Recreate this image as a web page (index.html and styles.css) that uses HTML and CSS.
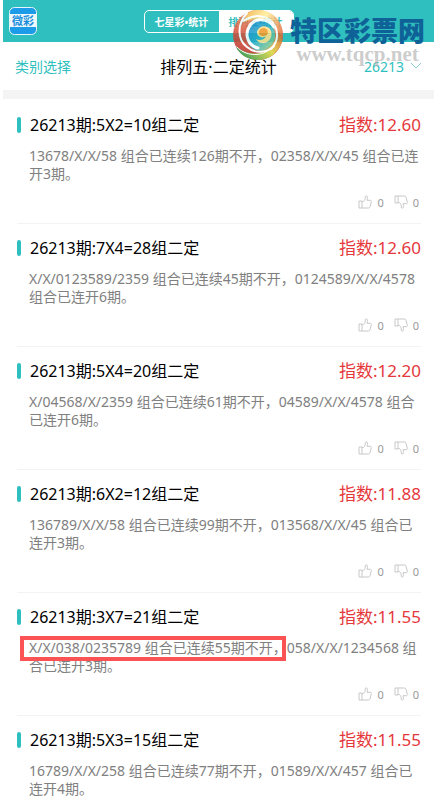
FILE: index.html
```html
<!DOCTYPE html>
<html lang="zh-CN">

<head>
    <meta charset="UTF-8">
    <meta name="viewport" content="width=device-width, initial-scale=1.0">
    <title>排列五·二定统计</title>
    <link rel="stylesheet" href="styles.css">
</head>

<body>
    <svg class="sprite" aria-hidden="true">
        <symbol id="thumb" viewBox="0 0 14 14">
            <path d="M1 6h3v7H1zM4 6.500h1.500C7 5 7.300 3.600 7.300 2c0-.9.5-1.300 1.100-1.200C9.600 1 9.800 2.700 9 5.300h3.300c.9 0 1.200.7 1 1.500l-1.300 5c-.2.800-.7 1.200-1.500 1.200H4"/>
        </symbol>
    </svg>

    <header class="header">
        <a class="logo" href="#" aria-label="微彩">
            <svg viewBox="0 0 28 28">
                <rect x="0.500" y="0.500" width="27" height="27" rx="5" fill="#1b9be8" stroke="#e4f6fb"/>
                <rect x="1" y="7" width="26" height="13" fill="#eef8fd"/>
                <text x="14" y="18" text-anchor="middle">微彩</text>
            </svg>
        </a>
        <nav class="tabs">
            <button class="tab">七星彩•统计</button>
            <button class="tab active">排列五•统计</button>
        </nav>
        <div class="watermark">
            <svg class="orb" viewBox="0 0 52 52">
                <defs>
                    <linearGradient id="red" x1="0.5" y1="0" x2="0.3" y2="1">
                        <stop offset="0" stop-color="#f2a066"/>
                        <stop offset="0.5" stop-color="#d4513c"/>
                        <stop offset="1" stop-color="#b3261f"/>
                    </linearGradient>
                    <linearGradient id="gold" x1="0" y1="0" x2="1" y2="0.8">
                        <stop offset="0" stop-color="#f0a83c"/>
                        <stop offset="0.4" stop-color="#fff09a"/>
                        <stop offset="1" stop-color="#dc4526"/>
                    </linearGradient>
                    <linearGradient id="green" x1="0" y1="0.6" x2="1" y2="0">
                        <stop offset="0" stop-color="#2f9440"/>
                        <stop offset="0.5" stop-color="#d9d438"/>
                        <stop offset="1" stop-color="#dc4526"/>
                    </linearGradient>
                    <linearGradient id="blue" x1="0" y1="0" x2="1" y2="1">
                        <stop offset="0" stop-color="#1782c8"/>
                        <stop offset="0.5" stop-color="#22abc8"/>
                        <stop offset="1" stop-color="#a8d36a"/>
                    </linearGradient>
                </defs>
                <circle cx="26" cy="26" r="25" fill="url(#red)"/>
                <path d="M17 3C31-3 47 6 50 20c2 10-1 18-8 25 4-10 4-20-2-27C34 10 24 8 12 13c1-4 3-8 5-10z" fill="url(#gold)"/>
                <path d="M4 38c10 8 24 9 33 1 6-5 8-12 6-20 5 4 8 9 7 14-4 11-13 18-24 18C16 51 8 46 4 38z" fill="url(#green)"/>
                <path d="M16 20C19 11 32 8 39 15c7 8 5 20-4 25-9 5-19-1-20-10 0-4 0-7 1-10z" fill="url(#blue)"/>
                <g fill="none" stroke="#fff" stroke-linecap="round">
                    <path d="M15 4C5 15 5 30 15 38c8 7 20 6 27-1" stroke-width="2"/>
                    <path d="M42 18C36 9 22 8 17 18c-5 9 0 19 9 21" stroke-width="3"/>
                    <path d="M11 12C23 4 37 6 43 17c4 8 2 17-4 23" stroke-width="2"/>
                    <path d="M5 38c8 9 23 10 32 3" stroke-width="1"/>
                </g>
                <path d="M25 23c1-6 9-8 13-3 4 6 0 14-7 14-4 0-6-2-7-4 3 2 9 1 10-3-3 3-9 1-9-4z" fill="#ffe08a"/>
                <path d="M27 22c2-4 8-4 9 1 0 4-6 6-9 2z" fill="#ef9825"/>
            </svg>
            <div class="brand">
                <strong>特区彩票网</strong>
                <span>www.tqcp.net</span>
            </div>
        </div>
    </header>

    <section class="toolbar">
        <button class="category">类别选择</button>
        <h1>排列五·二定统计</h1>
        <div class="issue">
            <select aria-label="期号">
                <option>26213</option>
            </select>
            <svg viewBox="0 0 12 8"><path d="M1 1l5 5 5-5"/></svg>
        </div>
    </section>

    <main class="list">
        <article class="item">
            <div class="item-head">
                <h2>26213期:5X2=10组二定</h2>
                <span class="score">指数:12.60</span>
            </div>
            <p>13678/X/X/58 组合已连续126期不开，02358/X/X/45 组合已连开3期。</p>
            <div class="votes">
                <button aria-label="赞"><svg><use href="#thumb"/></svg>0</button>
                <button aria-label="踩"><svg class="down"><use href="#thumb"/></svg>0</button>
            </div>
        </article>
        <article class="item">
            <div class="item-head">
                <h2>26213期:7X4=28组二定</h2>
                <span class="score">指数:12.60</span>
            </div>
            <p>X/X/0123589/2359 组合已连续45期不开，0124589/X/X/4578 组合已连开6期。</p>
            <div class="votes">
                <button aria-label="赞"><svg><use href="#thumb"/></svg>0</button>
                <button aria-label="踩"><svg class="down"><use href="#thumb"/></svg>0</button>
            </div>
        </article>
        <article class="item">
            <div class="item-head">
                <h2>26213期:5X4=20组二定</h2>
                <span class="score">指数:12.20</span>
            </div>
            <p>X/04568/X/2359 组合已连续61期不开，04589/X/X/4578 组合已连开6期。</p>
            <div class="votes">
                <button aria-label="赞"><svg><use href="#thumb"/></svg>0</button>
                <button aria-label="踩"><svg class="down"><use href="#thumb"/></svg>0</button>
            </div>
        </article>
        <article class="item">
            <div class="item-head">
                <h2>26213期:6X2=12组二定</h2>
                <span class="score">指数:11.88</span>
            </div>
            <p>136789/X/X/58 组合已连续99期不开，013568/X/X/45 组合已连开3期。</p>
            <div class="votes">
                <button aria-label="赞"><svg><use href="#thumb"/></svg>0</button>
                <button aria-label="踩"><svg class="down"><use href="#thumb"/></svg>0</button>
            </div>
        </article>
        <article class="item">
            <div class="item-head">
                <h2>26213期:3X7=21组二定</h2>
                <span class="score">指数:11.55</span>
            </div>
            <p><span class="marked">X/X/038/0235789 组合已连续55期不开，</span>058/X/X/1234568 组合已连开3期。</p>
            <div class="votes">
                <button aria-label="赞"><svg><use href="#thumb"/></svg>0</button>
                <button aria-label="踩"><svg class="down"><use href="#thumb"/></svg>0</button>
            </div>
        </article>
        <article class="item">
            <div class="item-head">
                <h2>26213期:5X3=15组二定</h2>
                <span class="score">指数:11.55</span>
            </div>
            <p>16789/X/X/258 组合已连续77期不开，01589/X/X/457 组合已连开4期。</p>
        </article>
    </main>
</body>

</html>
```
FILE: styles.css
```css
* {
    box-sizing: border-box;
}

body {
    margin: 0;
    padding-left: 3px;
    background: #fff;
    color: #000;
    font-family: "Noto Sans", "Noto Sans CJK SC", sans-serif;
    font-size: 14px;
}

button,
select {
    font-family: inherit;
    border: none;
    background: none;
    padding: 0;
    cursor: pointer;
}

h1,
h2,
p {
    margin: 0;
    font-weight: normal;
}

.sprite {
    display: none;
}

/* Cabecera */
.header {
    position: relative;
    display: grid;
    grid-template-columns: 1fr auto 1fr;
    align-items: center;
    height: 42px;
    padding: 0 6px;
    background: #2fbfbe;
}

.logo {
    width: 28px;
    height: 28px;
}

.logo svg {
    display: block;
}

.logo text {
    font-size: 11px;
    font-weight: bold;
    fill: #1b8fdc;
}

.tabs {
    display: flex;
    width: 150px;
    height: 23px;
    border: 1px solid #fff;
    border-radius: 5px;
    overflow: hidden;
}

.tab {
    flex: 1;
    color: #fff;
    font-size: 10px;
    font-weight: bold;
}

.tab.active {
    background: #fff;
    color: #2fbfbe;
}

.watermark {
    position: absolute;
    top: 9px;
    right: 9px;
    display: flex;
    gap: 6px;
    pointer-events: none;
}

.orb {
    width: 52px;
    height: 52px;
    opacity: 0.85;
}

.brand {
    display: flex;
    flex-direction: column;
    align-items: center;
    padding-top: 8px;
}

.brand strong {
    font-size: 27px;
    line-height: 28px;
    font-weight: 900;
    color: #0f6297;
}

.brand span {
    font-family: "Liberation Serif", serif;
    font-size: 21px;
    line-height: 18px;
    font-weight: bold;
    color: rgba(175, 175, 175, 0.65);
}

/* Barra de seleccion */
.toolbar {
    display: grid;
    grid-template-columns: 1fr auto 1fr;
    align-items: center;
    height: 48px;
    padding: 0 12px;
}

.toolbar h1 {
    font-size: 16px;
}

.category {
    justify-self: start;
    color: #2fbfbe;
    font-size: 14px;
}

.issue {
    display: flex;
    justify-self: end;
    align-items: center;
    gap: 5px;
}

.issue select {
    appearance: none;
    color: #2fbfbe;
    font-size: 14px;
}

.issue svg {
    width: 12px;
    height: 8px;
    fill: none;
    stroke: #8ccfd0;
}

/* Lista */
.list {
    border-top: 9px solid #f4f4f4;
    padding: 2px 13px 0 14px;
}

.item {
    padding: 12px 0 13px;
    border-bottom: 1px solid #f3f3f3;
}

.item:last-child {
    padding-bottom: 0;
    border-bottom: none;
}

.item-head {
    display: flex;
    justify-content: space-between;
    align-items: center;
    height: 24px;
    line-height: 22px;
}

.item-head h2 {
    display: flex;
    align-items: center;
    gap: 9px;
    font-size: 16px;
}

.item-head h2::before {
    content: "";
    width: 4px;
    height: 16px;
    border-radius: 2px;
    background: #2fbfbe;
}

.score {
    color: #e5383b;
    font-size: 17px;
}

.item p {
    margin: 10px 0 11px;
    padding-left: 12px;
    color: #808080;
    line-height: 18px;
}

.marked {
    position: relative;
    display: inline-block;
}

.marked::after {
    content: "";
    position: absolute;
    top: -3px;
    right: 1px;
    bottom: -4px;
    left: -9px;
    border: 4px solid #fb5253;
}

.votes {
    display: flex;
    justify-content: flex-end;
    gap: 10px;
    height: 16px;
    padding-right: 2px;
}

.votes button {
    display: flex;
    align-items: center;
    gap: 5px;
    color: #999;
    font-size: 11px;
}

.votes svg {
    width: 14px;
    height: 14px;
    fill: none;
    stroke: #c8c8c8;
}

.votes .down {
    transform: rotate(180deg) scaleX(-1);
}
```
